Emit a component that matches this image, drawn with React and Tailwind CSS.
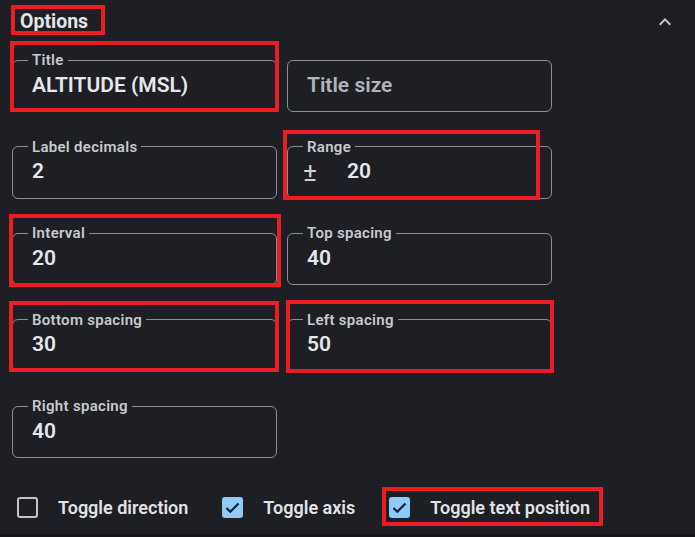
import React from 'react';

// Outlined text field with notched label (MUI style)
const Field = ({ label, value, placeholder, adornment }) => (
  <fieldset className="h-[60px] rounded-[6px] border border-[#8b8e94] px-[15px] min-w-0">
    {label ? (
      <legend className="px-[4px] text-[15px] leading-[16px] font-semibold tracking-[0.3px] text-[#c7c9cd]">{label}</legend>
    ) : (
      <legend className="h-[16px] w-0 p-0" />
    )}
    <div className="flex h-[36px] items-center pl-[4px] pb-[1px] text-[21px] font-semibold">
      {adornment && (
        <span className="ml-[-4px] w-[44px] text-[26px] leading-none font-normal text-[#d0d2d6]">{adornment}</span>
      )}
      {value !== undefined ? (
        <span className="text-[#e6e7ea]">{value}</span>
      ) : (
        <span className="text-[#b3b5ba]">{placeholder}</span>
      )}
    </div>
  </fieldset>
);

const CheckBox = ({ checked }) => (
  <svg width="21" height="21" viewBox="0 0 21 21">
    {checked ? (
      <>
        <rect x="0" y="0" width="21" height="21" rx="3" fill="#90caf9" />
        <path d="M4.5 11l3.8 3.8L16.5 6.5" fill="none" stroke="#0e2436" strokeWidth="2.2" />
      </>
    ) : (
      <rect x="1" y="1" width="19" height="19" rx="2" fill="none" stroke="#c2c4c8" strokeWidth="2" />
    )}
  </svg>
);

const Toggle = ({ label, checked }) => (
  <div className="flex items-center gap-[20px]">
    <CheckBox checked={checked} />
    <span className="text-[18px] font-semibold text-[#e2e3e6]">{label}</span>
  </div>
);

const RedBox = ({ className }) => (
  <div className={`pointer-events-none absolute border-[4px] border-[#ec1c24] ${className}`} />
);

export default function App() {
  return (
    <div
      className="relative flex h-[537px] w-full flex-col bg-[#1d1f24]"
      style={{ fontFamily: 'Roboto, "Noto Sans", sans-serif' }}
    >
      <div className="flex h-[42px] items-center justify-between pl-[20px] pr-[18px] pt-[2px]">
        <span className="text-[19.5px] font-bold text-[#e4e5e8]">Options</span>
        <svg width="24" height="24" viewBox="0 0 24 24" fill="#c4c6ca">
          <path d="M12 8l-6 6 1.41 1.41L12 10.83l4.59 4.58L18 14z" />
        </svg>
      </div>

      <div className="mt-[10px] grid grid-cols-[265px_265px] gap-x-[10px] gap-y-[26.5px] pl-[12px]">
        <Field label="Title" value="ALTITUDE (MSL)" />
        <Field placeholder="Title size" />
        <Field label="Label decimals" value="2" />
        <Field label="Range" value="20" adornment="±" />
        <Field label="Interval" value="20" />
        <Field label="Top spacing" value="40" />
        <Field label="Bottom spacing" value="30" />
        <Field label="Left spacing" value="50" />
        <Field label="Right spacing" value="40" />
      </div>

      <div className="mt-[29px] flex h-[40px] items-center gap-x-[34px] pl-[17px]">
        <Toggle label="Toggle direction" />
        <Toggle label="Toggle axis" checked />
        <Toggle label="Toggle text position" checked />
      </div>

      <div className="mt-auto h-[3px] bg-[#141519]" />

      {/* annotation boxes */}
      <RedBox className="left-[11px] top-[5px] h-[30px] w-[94px]" />
      <RedBox className="left-[10px] top-[41px] h-[71px] w-[269px]" />
      <RedBox className="left-[283px] top-[130px] h-[70px] w-[257px]" />
      <RedBox className="left-[9px] top-[214px] h-[73px] w-[272px]" />
      <RedBox className="left-[9px] top-[301px] h-[71px] w-[270px]" />
      <RedBox className="left-[286px] top-[300px] h-[73px] w-[268px]" />
      <RedBox className="left-[382px] top-[487px] h-[39px] w-[221px]" />
    </div>
  );
}
